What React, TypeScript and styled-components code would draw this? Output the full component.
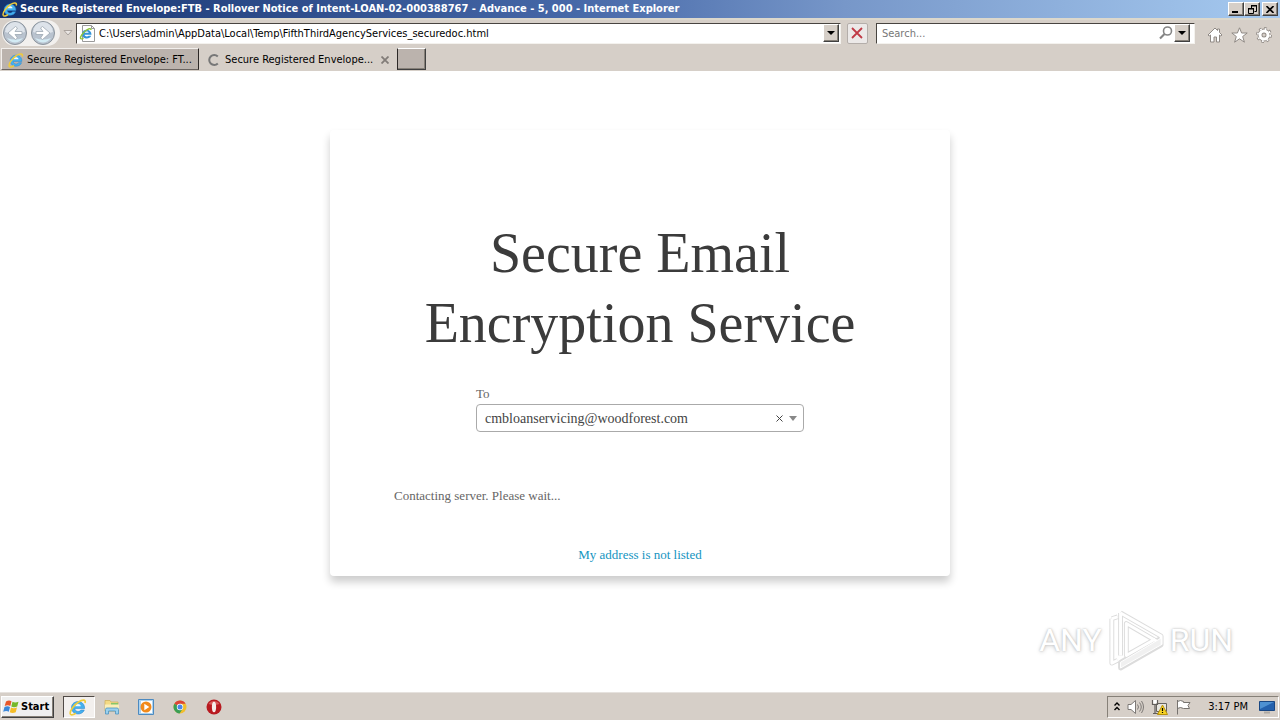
import React from 'react';
import styled, { createGlobalStyle, css } from 'styled-components';

const face = '#d6cfc8';
const uiFont = '"DejaVu Sans Condensed", "DejaVu Sans", Verdana, sans-serif';

const GlobalStyle = createGlobalStyle`
  * { box-sizing: border-box; }
  body { margin: 0; background: #fff; }
  button, input, select { font: inherit; color: inherit; margin: 0; }
  svg { display: block; flex: none; }
`;

const raised = css`
  border: 1px solid;
  border-color: #fff #404040 #404040 #fff;
  box-shadow: inset -1px -1px 0 #868078;
`;

const Desktop = styled.div`
  display: flex;
  flex-direction: column;
  min-height: 100vh;
  font: 11px/14px ${uiFont};
  color: #000;
`;

const TitleBar = styled.header`
  display: flex;
  align-items: center;
  gap: 2px;
  height: 18px;
  padding: 0 2px;
  color: #fff;
  background: linear-gradient(90deg, #16336f, #4668a8 45%, #7797c9 66%, #a6caf0);
`;

const WindowTitle = styled.h1`
  flex: 1;
  min-width: 0;
  margin: 0;
  overflow: hidden;
  white-space: nowrap;
  font-size: 11px;
  line-height: 18px;
  font-weight: bold;
`;

const WindowButtons = styled.div`
  display: flex;
`;

const CaptionButton = styled.button<{ $apart?: boolean }>`
  ${raised}
  display: flex;
  align-items: center;
  justify-content: center;
  width: 16px;
  height: 14px;
  padding: 0;
  margin-left: ${p => (p.$apart ? 2 : 0)}px;
  background: ${face};
`;

const NavRow = styled.form`
  display: flex;
  align-items: center;
  height: 30px;
  padding: 0 8px 2px 2px;
  background: ${face};
  border-top: 2px solid #dcd8cc;
`;

const NavButtons = styled.div`
  display: flex;
  gap: 2px;
  padding-right: 4px;
  border-radius: 13px;
  background: #f2f0ee;
`;

const PlainButton = styled.button<{ $width?: number }>`
  display: flex;
  align-items: center;
  justify-content: center;
  flex: none;
  width: ${p => (p.$width ? `${p.$width}px` : 'auto')};
  padding: 0;
  border: 0;
  background: none;
`;

const Field = styled.div<{ $grow: number }>`
  display: flex;
  align-items: center;
  flex: ${p => p.$grow} 1 0;
  min-width: 0;
  height: 21px;
  padding: 0 1px 0 2px;
  background: #fff;
  border: 1px solid;
  border-color: #484440 #f4f2ee #f4f2ee #484440;
`;

const FieldInput = styled.input`
  flex: 1;
  min-width: 0;
  height: 18px;
  padding: 0 3px;
  border: 0;
  outline: 0;
  background: none;
  &::placeholder { color: #777; opacity: 1; }
`;

const DropButton = styled.button`
  ${raised}
  display: flex;
  align-items: center;
  justify-content: center;
  width: 16px;
  height: 18px;
  padding: 0;
  background: ${face};
`;

const StopButton = styled.button`
  display: flex;
  align-items: center;
  justify-content: center;
  width: 21px;
  height: 21px;
  margin: 0 8px 0 6px;
  padding: 0;
  border: 1px solid #b4aeaa;
  border-radius: 2px;
  background: #ece9e8;
`;

const Tools = styled.div`
  display: flex;
  gap: 8px;
  padding: 4px 0 0 12px;
`;

const TabRow = styled.nav`
  display: flex;
  align-items: flex-start;
  height: 23px;
  padding-left: 1px;
  background: ${face};
`;

const Tab = styled.div<{ $active?: boolean }>`
  display: flex;
  align-items: center;
  width: 198px;
  height: 22px;
  padding: 1px 4px 0 6px;
  border: 1px solid;
  white-space: nowrap;
  border-color: ${p => (p.$active ? face : '#f2efec #2c2826 #6a6460 #f2efec')};
  background: ${p => (p.$active ? face : '#bbb3ad')};
`;

const TabButton = styled.button`
  display: flex;
  align-items: center;
  flex: 1;
  gap: 3px;
  padding: 0;
  border: 0;
  background: none;
`;

const NewTab = styled.button`
  ${raised}
  width: 29px;
  height: 22px;
  border-left-color: #2c2826;
  background: #bbb3ad;
`;

const Page = styled.main`
  position: relative;
  flex: 1;
  padding: 59px 16px 64px;
  background: #fff;
  font-family: "Liberation Serif", "Times New Roman", serif;
`;

const Card = styled.section`
  display: flex;
  flex-direction: column;
  max-width: 620px;
  margin: 0 auto;
  padding: 88px 64px 12px;
  border-radius: 4px;
  background: #fff;
  box-shadow: 0 6px 8px rgba(0, 0, 0, 0.2);
`;

const Heading = styled.h2`
  margin: 0;
  text-align: center;
  font-size: 56px;
  line-height: 70px;
  font-weight: normal;
  color: #3b3b3b;
`;

const Recipient = styled.div`
  align-self: center;
  width: 328px;
  max-width: 100%;
  margin-top: 27px;
`;

const RecipientLabel = styled.label`
  display: block;
  font-size: 13px;
  line-height: 18px;
  color: #666;
`;

const SelectBox = styled.div`
  position: relative;
  margin-top: 1px;
`;

const Select = styled.select`
  appearance: none;
  display: block;
  width: 100%;
  height: 28px;
  padding: 2px 40px 0 8px;
  border: 1px solid #aaa;
  border-radius: 4px;
  background: #fff;
  font-size: 14px;
  color: #444;
`;

const SelectMarks = styled.div`
  position: absolute;
  inset: 0 7px 0 auto;
  display: flex;
  align-items: center;
  gap: 6px;
  pointer-events: none;
`;

const Status = styled.p`
  margin: 55px 0 0;
  font-size: 13px;
  line-height: 18px;
  color: #666;
`;

const NotListed = styled.a`
  align-self: center;
  margin-top: 41px;
  font-size: 13px;
  line-height: 18px;
  color: #1494bf;
  text-decoration: none;
`;

const Watermark = styled.div`
  position: absolute;
  right: 47px;
  bottom: 20px;
  display: flex;
  align-items: center;
  gap: 5px;
  font: 32px/64px Roboto, "Liberation Sans", sans-serif;
  color: #fff;
  text-shadow: 0 0 2px #bbb, 0 1px 4px #ccc;
`;

const TaskBar = styled.footer`
  display: flex;
  align-items: center;
  height: 28px;
  padding: 0 1px;
  background: ${face};
  border-top: 1px solid #e6e2de;
`;

const StartButton = styled.button`
  ${raised}
  display: flex;
  align-items: center;
  gap: 1px;
  width: 53px;
  height: 22px;
  padding: 0 1px;
  font-weight: bold;
`;

const Launchers = styled.div`
  display: flex;
  flex: 1;
  align-items: center;
  gap: 2px;
  margin-left: 9px;
`;

const Launcher = styled.button<{ $open?: boolean }>`
  display: flex;
  align-items: center;
  justify-content: center;
  width: 32px;
  height: 22px;
  padding: 0 2px 0 0;
  border: 1px solid;
  border-color: ${p => (p.$open ? '#504a46 #fff #fff #504a46' : 'transparent')};
  background: ${p => (p.$open ? '#f3f0ee' : 'none')};
`;

const Tray = styled.div`
  display: flex;
  align-items: center;
  gap: 7px;
  height: 22px;
  padding: 0 3px 0 6px;
  border: 1px solid;
  border-color: #868078 #fff #fff #868078;
`;

const Clock = styled.time`
  margin: 0 4px 0 9px;
`;

const IeIcon = ({ size = 16 }: { size?: number }) => (
  <svg width={size} height={size} viewBox="0 0 16 16" fill="none">
    <path d="M13.900 9.400H5.200c.2 2.900 4.300 3.300 5.300 1.300h3.100c-1.800 5.200-11.400 4.700-11.400-2 0-7.300 11.900-7.700 11.700.7Z" fill="#45b0ee" stroke="#2a86cf" strokeWidth=".5" />
    <path d="M5.400 7.300h5.100C10.300 4.700 5.800 4.700 5.400 7.300Z" fill="#eef8ff" />
    <path d="M14.200 4.500c1.100-3.400-2.500-3.200-5.700-1C4.500 6 .3 11.600 1.200 14.200c.6 1.500 3 .6 4.800-.6" stroke="#f0cc3a" strokeWidth="1.500" />
  </svg>
);

const PageIcon = () => (
  <svg width="17" height="17" viewBox="0 0 17 17" fill="none">
    <path d="M3.500.5h9l3 3v13h-12Z" fill="#fff" stroke="#9a9a9a" />
    <path d="M12.500.5v3h3" stroke="#9a9a9a" />
    <path d="M12.500 9.800H5.600c.3 2 3.100 2.200 4 .9h2.600c-1.500 4.200-9.200 3.500-9.200-1.800 0-5.800 9.600-5.800 9.500.9Z" fill="#3494d8" />
    <path d="M5.700 7.800h4c-.3-1.900-3.600-1.900-4 0Z" fill="#fff" />
    <path d="M12 5c0-2.500-3-1-5 .5C4 7.700.8 12 1.500 13.500c.4.800 2 .3 3-.4" stroke="#8ec43a" strokeWidth="1.400" />
  </svg>
);

const ArrowDisc = ({ forward }: { forward?: boolean }) => (
  <svg width="26" height="26" viewBox="0 0 26 26" fill="none">
    <circle cx="13" cy="13" r="11.500" fill="#b9c3cf" stroke="#8b949d" />
    <path d="M3 12a10 10 0 0 1 20 0q-10 4-20 0Z" fill="#dde3ea" />
    <path d="M5 18a9.500 9.500 0 0 0 16 0q-8 3-16 0Z" fill="#d3ebf4" />
    <path
      d={forward ? 'M6 11.500h7L10.500 8l2-1.500L20 13l-7.500 6.500-2-1.500 2.500-3.500H6Z' : 'M20 11.500h-7L15.500 8l-2-1.500L6 13l7.500 6.500 2-1.500-2.500-3.500h7Z'}
      fill="#fff" stroke="#9da8b2" strokeWidth=".8"
    />
  </svg>
);

const Caret = () => <svg width="8" height="4" viewBox="0 0 8 4"><path d="M0 0h8L4 4Z" fill="#000" /></svg>;

const App = () => (
  <Desktop>
    <GlobalStyle />
    <TitleBar>
      <IeIcon />
      <WindowTitle>Secure Registered Envelope:FTB - Rollover Notice of Intent-LOAN-02-000388767 - Advance - 5, 000 - Internet Explorer</WindowTitle>
      <WindowButtons>
        <CaptionButton aria-label="Minimize"><svg width="8" height="8"><path d="M0 6h6v2H0Z" /></svg></CaptionButton>
        <CaptionButton aria-label="Restore">
          <svg width="9" height="9" fill="none" stroke="#000"><path d="M3 1h6M3.500 1v2M8.500 1v5.500H6.500M0 4h6M.5 4v4.500h5V4" /><path d="M3 .5h6M0 3.500h6" /></svg>
        </CaptionButton>
        <CaptionButton aria-label="Close" $apart><svg width="8" height="7" stroke="#000" strokeWidth="1.600"><path d="m.5 0 7 7m0-7-7 7" /></svg></CaptionButton>
      </WindowButtons>
    </TitleBar>

    <NavRow onSubmit={e => e.preventDefault()}>
      <NavButtons>
        <PlainButton type="button" aria-label="Back"><ArrowDisc /></PlainButton>
        <PlainButton type="button" aria-label="Forward"><ArrowDisc forward /></PlainButton>
      </NavButtons>
      <PlainButton type="button" aria-label="Recent pages" $width={16}>
        <svg width="10" height="6" fill="#eae6e3" stroke="#aaa39e"><path d="M1 .5h8L5 5Z" /></svg>
      </PlainButton>
      <Field $grow={767}>
        <PageIcon />
        <FieldInput aria-label="Address" defaultValue={'C:\\Users\\admin\\AppData\\Local\\Temp\\FifthThirdAgencyServices_securedoc.html'} />
        <DropButton type="button" aria-label="Show addresses"><Caret /></DropButton>
      </Field>
      <StopButton type="button" aria-label="Stop">
        <svg width="12" height="12" stroke="#c03a46" strokeWidth="1.800"><path d="m1 1 10 10m0-10L1 11" /></svg>
      </StopButton>
      <Field $grow={317}>
        <FieldInput aria-label="Search" placeholder="Search..." />
        <PlainButton type="submit" aria-label="Go" $width={16}>
          <svg width="14" height="14" fill="none" stroke="#858585" strokeWidth="1.600"><circle cx="8.500" cy="5" r="4" /><path d="M5.500 8 1 12.500" strokeWidth="2.200" /></svg>
        </PlainButton>
        <DropButton type="button" aria-label="Search options"><Caret /></DropButton>
        <svg width="3" height="18" />
      </Field>
      <Tools>
        <PlainButton type="button" aria-label="Home" $width={16}>
          <svg width="16" height="16" fill="#fff" stroke="#8f8984"><path d="M8 1 1 8l1.200 1L3.500 8v7H7v-5h2.500v5h3V8l1.300 1L15 8l-2.500-2.500V2h-2v1.500Z" /></svg>
        </PlainButton>
        <PlainButton type="button" aria-label="Favorites" $width={17}>
          <svg width="17" height="16" fill="#fff" stroke="#8f8984"><path d="m8.500.8 2.100 5.200h5.600l-4.500 3.500 1.700 5.700-4.900-3.400-4.900 3.400 1.700-5.700L.8 6h5.600Z" /></svg>
        </PlainButton>
        <PlainButton type="button" aria-label="Tools" $width={16}>
          <svg width="16" height="16" fill="none"><g stroke="#8f8984"><circle cx="8" cy="8" r="6.700" strokeWidth="2.400" strokeDasharray="2.600 2.660" /><circle cx="8" cy="8" r="4" strokeWidth="4.800" /></g><circle cx="8" cy="8" r="6.200" stroke="#fff" strokeWidth="1.600" strokeDasharray="1.800 3.070" /><circle cx="8" cy="8" r="4" stroke="#fff" strokeWidth="3" /></svg>
        </PlainButton>
      </Tools>
    </NavRow>

    <TabRow>
      <Tab><TabButton><IeIcon />Secure Registered Envelope: FT...</TabButton></Tab>
      <Tab $active>
        <TabButton>
          <svg width="16" height="16" fill="none" stroke="#777" strokeWidth="2"><path d="M11.800 4.500a5 5 0 1 0 0 7" /></svg>
          Secure Registered Envelope...
        </TabButton>
        <PlainButton aria-label="Close tab" $width={14}><svg width="8" height="8" stroke="#827c78" strokeWidth="1.800"><path d="m.5.5 7 7m0-7-7 7" /></svg></PlainButton>
      </Tab>
      <NewTab aria-label="New tab" />
    </TabRow>

    <Page>
      <Card>
        <Heading>Secure Email Encryption Service</Heading>
        <Recipient>
          <RecipientLabel htmlFor="recipient">To</RecipientLabel>
          <SelectBox>
            <Select id="recipient"><option>cmbloanservicing@woodforest.com</option></Select>
            <SelectMarks>
              <svg width="7" height="7" stroke="#444"><path d="m.5.5 6 6m0-6-6 6" /></svg>
              <svg width="8" height="5"><path d="M0 0h8L4 5Z" fill="#888" /></svg>
            </SelectMarks>
          </SelectBox>
        </Recipient>
        <Status>Contacting server. Please wait...</Status>
        <NotListed href="#">My address is not listed</NotListed>
      </Card>
      <Watermark>
        <span>ANY</span>
        <svg width="58" height="62" viewBox="0 0 60 64" fill="none" strokeLinejoin="round">
          <g stroke="#dcdcdc" strokeWidth="5">
            <path d="M14 4v44M14 4l42 24v8L20 15v33l30-17M5 10v46l6-3M5 10l6-2M14 55v6l42-24v-7Z" />
          </g>
          <g stroke="#fff" strokeWidth="3">
            <path d="M14 4v44M14 4l42 24v8L20 15v33l30-17M5 10v46l6-3M5 10l6-2" />
          </g>
          <path d="M14 55v6l42-24v-7Z" fill="#f0f0f0" stroke="#fff" />
        </svg>
        <span>RUN</span>
      </Watermark>
    </Page>

    <TaskBar>
      <StartButton>
        <svg width="17" height="16" viewBox="0 0 17 16">
          <path d="M3 2.500Q6 .5 8.500 2.300L7.300 7Q5 5.500 1.700 7Z" fill="#e8572a" /><path d="M9.500 2.700Q12 4.200 15.500 2.700L14.200 7.500Q11 9 8.300 7.500Z" fill="#76b82a" />
          <path d="M1.500 8Q4.500 6.500 7 8L5.800 12.800Q3.500 11.300.2 12.800Z" fill="#3b87d9" /><path d="M8 8.500Q10.500 10 14 8.500L12.700 13.300Q9.500 14.800 6.800 13.300Z" fill="#f5bd27" />
        </svg>
        Start
      </StartButton>
      <Launchers>
        <Launcher $open aria-label="Internet Explorer"><IeIcon size={18} /></Launcher>
        <Launcher aria-label="File Explorer">
          <svg width="18" height="16" viewBox="0 0 18 16"><path d="M2 1.500h5l1 1.500h7V12H2Z" fill="#f3da85" stroke="#cfb361" strokeWidth=".8" /><path d="M8 4h7v2H8Z" fill="#86c66a" /><path d="M2 5.500h14V11H2Z" fill="#fbeeb8" /><path d="M2.500 15v-4.500q0-1.500 1.500-1.500h10q1.500 0 1.500 1.500V15h-3v-3h-7v3Z" fill="#9ad0ee" stroke="#4c94c0" strokeWidth=".8" /></svg>
        </Launcher>
        <Launcher aria-label="Media Player">
          <svg width="16" height="16"><path d="M.5.5h15v15H.5Z" fill="#acd3f0" stroke="#4d8ac0" /><path d="M3 2h11v12H3Z" fill="#fff" /><circle cx="8" cy="8" r="5.500" fill="#f18a1b" /><path d="m6.300 4.800 5 3.200-5 3.200Z" fill="#fff" /></svg>
        </Launcher>
        <Launcher aria-label="Chrome">
          <svg width="14" height="14" viewBox="0 0 14 14"><circle cx="7" cy="7" r="6.500" fill="#f2be2c" /><path d="M7 7 1.400 3.700A6.500 6.500 0 0 1 12.600 3.700H7Z" fill="#dc4437" /><path d="M7 7 1.400 3.700A6.500 6.500 0 0 0 6.600 13.500L9.800 8.600Z" fill="#3a9e55" /><circle cx="7" cy="7" r="3.200" fill="#fff" /><circle cx="7" cy="7" r="2.500" fill="#4a87e8" /></svg>
        </Launcher>
        <Launcher aria-label="Opera">
          <svg width="16" height="16"><circle cx="8" cy="8" r="7.500" fill="#b81a20" /><path d="M2.500 5A6.500 6.500 0 0 1 13.500 5Q8 7 2.500 5Z" fill="#d8595a" /><ellipse cx="8" cy="8" rx="2.100" ry="5.300" fill="#f5ecea" /></svg>
        </Launcher>
      </Launchers>
      <Tray>
        <svg width="6" height="9" fill="none" stroke="#000" strokeWidth="1.400"><path d="m.5 3.500 2.500-2.500 2.500 2.500M.5 8 3 5.500 5.500 8" /></svg>
        <svg width="17" height="16" fill="none" stroke="#7d7976"><path d="M1 5.500h3L8.500 1.500v13L4 10.500H1Z" fill="#fff" /><path d="M10.500 5.500q2 2.500 0 5M12.500 3.500q3.500 4.500 0 9M14.500 2q4 6 0 12" /></svg>
        <svg width="17" height="16" fill="none"><path d="M5.500 4.500h10v8h-10Z" fill="#e7e5df" stroke="#66635f" /><path d="M1.500 1v4.500h5V1M4 5.500v9M2 14.500h7" stroke="#625e5b" strokeWidth="1.200" /><path d="M2.300 1h3.400v3.500H2.300Z" fill="#fff" /><path d="m11.500 6 5 9.500h-10Z" fill="#f5d223" stroke="#b99109" /><path d="M11.500 9v3M11.500 13v1" stroke="#000" strokeWidth="1.200" /></svg>
        <svg width="17" height="16" fill="#fff" stroke="#77736f"><path d="M2.500 1v14.500M2.500 2.500q3-2 6 0v1h6.500l-2 3 1.500 3H8.500q-3-2-6 0Z" /></svg>
        <Clock>3:17 PM</Clock>
        <svg width="16" height="14"><path d="M.5 1.500h15v9H.5Z" fill="#2461ad" stroke="#194783" /><path d="M1 2h14L1 9Z" fill="#4e91d2" /><path d="M5 12.500h6" stroke="#afa9a3" strokeWidth="2" /></svg>
      </Tray>
    </TaskBar>
  </Desktop>
);

export default App;
